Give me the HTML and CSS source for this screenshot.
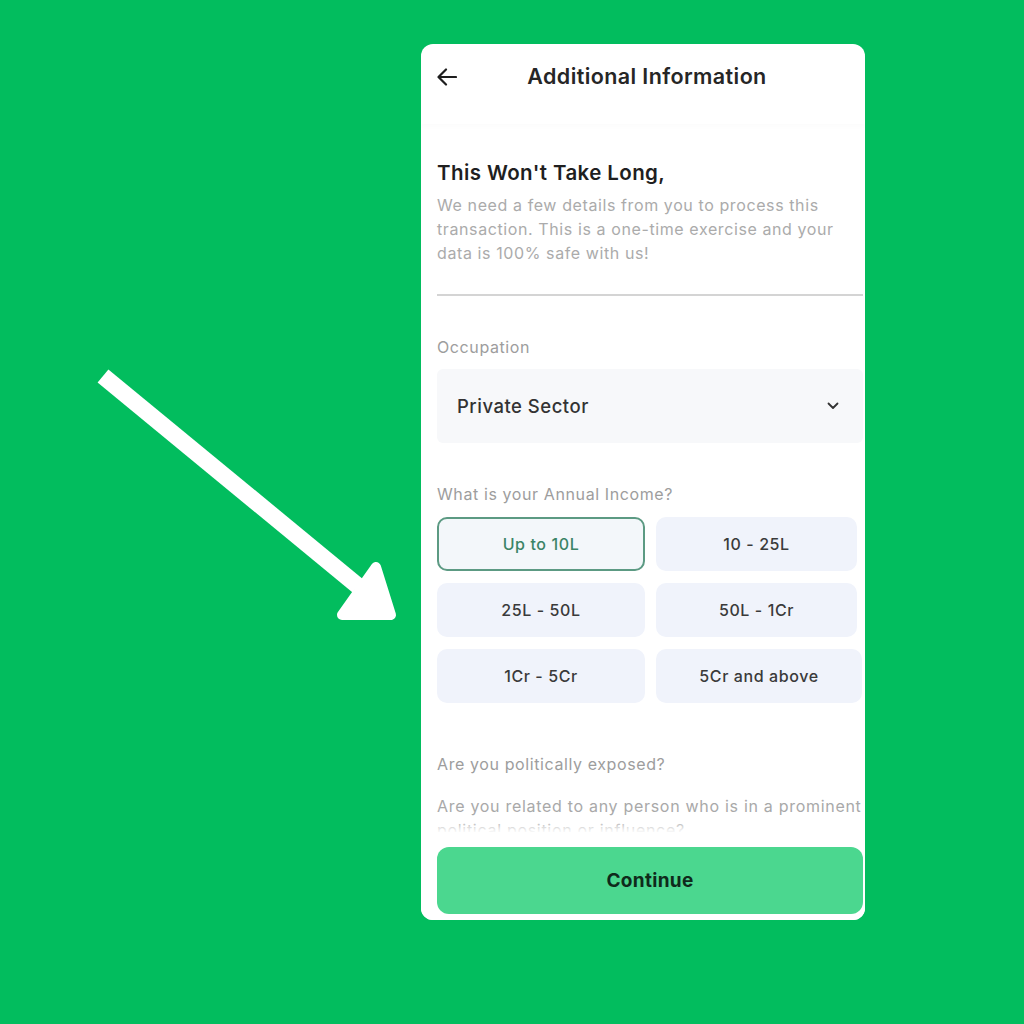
FILE: index.html
```html
<!DOCTYPE html>
<html lang="en">
<head>
<meta charset="utf-8">
<title>Additional Information</title>
<link rel="stylesheet" href="styles.css">
</head>
<body>
<div class="stage">
  <svg class="pointer" width="320" height="270" viewBox="0 0 320 270" aria-hidden="true">
    <line x1="13" y1="16" x2="268" y2="226" stroke="#fff" stroke-width="17" stroke-linecap="butt"/>
    <path d="M286 207 L301 255 L252 255 Z" fill="#fff" stroke="#fff" stroke-width="10" stroke-linejoin="round"/>
  </svg>
  <div class="card">
    <header class="topbar">
      <svg class="back" width="20" height="18" viewBox="0 0 20 18" aria-hidden="true">
        <path d="M19 9 H2 M9 1.5 L1.5 9 L9 16.5" fill="none" stroke="#1e1e1e" stroke-width="2.2" stroke-linecap="round" stroke-linejoin="round"/>
      </svg>
      <h1 class="title">Additional Information</h1>
    </header>
    <main class="content">
      <h2 class="heading">This Won't Take Long,</h2>
      <p class="intro">We need a few details from you to process this transaction. This is a one-time exercise and your data is 100% safe with us!</p>
      <hr class="divider">
      <div class="label label-occ">Occupation</div>
      <div class="select">
        <span>Private Sector</span>
        <svg width="12" height="8" viewBox="0 0 12 8" aria-hidden="true"><path d="M1.5 1.5 L6 6 L10.5 1.5" fill="none" stroke="#333" stroke-width="1.8" stroke-linecap="round" stroke-linejoin="round"/></svg>
      </div>
      <div class="label label-inc">What is your Annual Income?</div>
      <div class="chips">
        <div class="chip selected">Up to 10L</div>
        <div class="chip">10 - 25L</div>
        <div class="chip">25L - 50L</div>
        <div class="chip">50L - 1Cr</div>
        <div class="chip">1Cr - 5Cr</div>
        <div class="chip wide">5Cr and above</div>
      </div>
      <div class="label label-pol">Are you politically exposed?</div>
      <p class="related">Are you related to any person who is in a prominent political position or influence?</p>
    </main>
    <footer class="footer">
      <button class="continue">Continue</button>
    </footer>
  </div>
</div>
</body>
</html>
```

FILE: styles.css
```css
* { box-sizing: border-box; }
html, body { margin: 0; padding: 0; }
body {
  background: #02bd5e;
  width: 1024px;
  height: 1024px;
  overflow: hidden;
  font-family: "Inter", "Lato", sans-serif;
}
.stage {
  position: relative;
  width: 1024px;
  height: 1024px;
  padding: 44px 0 0 421px;
}
.pointer {
  position: absolute;
  left: 90px;
  top: 360px;
}
.card {
  width: 444px;
  height: 876px;
  background: #fff;
  border-radius: 12px;
  display: flex;
  flex-direction: column;
  overflow: hidden;
}
.topbar {
  height: 80px;
  flex: none;
  display: flex;
  align-items: flex-start;
  padding: 23px 16px 0 16px;
  position: relative;
  box-shadow: 0 3px 5px rgba(0,0,0,0.015);
  z-index: 1;
}
.back { margin-top: 1px; }
.title {
  margin: 0;
  font-size: 21.5px;
  font-weight: 600;
  color: #262626;
  line-height: 22px;
  position: absolute;
  left: 0; right: 0;
  text-align: center;
  top: 21px;
  padding-left: 8px;
  letter-spacing: 0.4px;
}
.content {
  flex: 1;
  overflow: hidden;
  padding: 37px 2px 0 16px;
}
.heading {
  margin: 0;
  font-size: 20.5px;
  font-weight: 600;
  line-height: 24px;
  color: #1f1f1f;
  letter-spacing: 0.4px;
}
.intro {
  margin: 8px 0 0 0;
  font-size: 16px;
  line-height: 24px;
  color: #ababab;
  letter-spacing: 0.6px;
  padding-right: 20px;
}
.divider {
  margin: 29px 0 0 0;
  border: none;
  height: 2px;
  background: #d4d4d4;
}
.label {
  font-size: 16px;
  line-height: 20px;
  color: #9d9d9d;
  letter-spacing: 0.6px;
}
.label-occ { margin-top: 41px; }
.select {
  margin-top: 12px;
  height: 74px;
  background: #f7f8fa;
  border-radius: 6px;
  display: flex;
  align-items: center;
  justify-content: space-between;
  padding: 0 24px 0 20px;
  font-size: 18.5px;
  font-weight: 500;
  letter-spacing: 0.5px;
  color: #333;
}
.label-inc { margin-top: 41px; }
.chips {
  margin-top: 13px;
  display: grid;
  grid-template-columns: 208px 201px;
  grid-auto-rows: 54px;
  column-gap: 11px;
  row-gap: 12px;
}
.chip {
  background: #f0f3fb;
  border-radius: 10px;
  display: flex;
  align-items: center;
  justify-content: center;
  font-size: 16px;
  font-weight: 500;
  letter-spacing: 0.6px;
  color: #3a3a3a;
}
.chip.wide { width: 206px; }
.chip.selected {
  background: #f3f7fa;
  border: 2px solid #5c9a83;
  color: #3b8466;
}
.label-pol { margin-top: 51px; }
.related {
  margin: 20px 0 0 0;
  font-size: 16px;
  line-height: 24px;
  color: #a9a9a9;
  letter-spacing: 0.7px;
}
.footer {
  flex: none;
  height: 88px;
  padding: 15px 2px 6px 16px;
  background: #fff;
  box-shadow: 0 -6px 8px rgba(255,255,255,0.97);
  position: relative;
}
.continue {
  width: 100%;
  height: 67px;
  border: none;
  border-radius: 12px;
  background: #4bd78f;
  font-family: inherit;
  font-size: 19px;
  font-weight: 700;
  letter-spacing: 0.3px;
  color: #0f2a1b;
}
```
